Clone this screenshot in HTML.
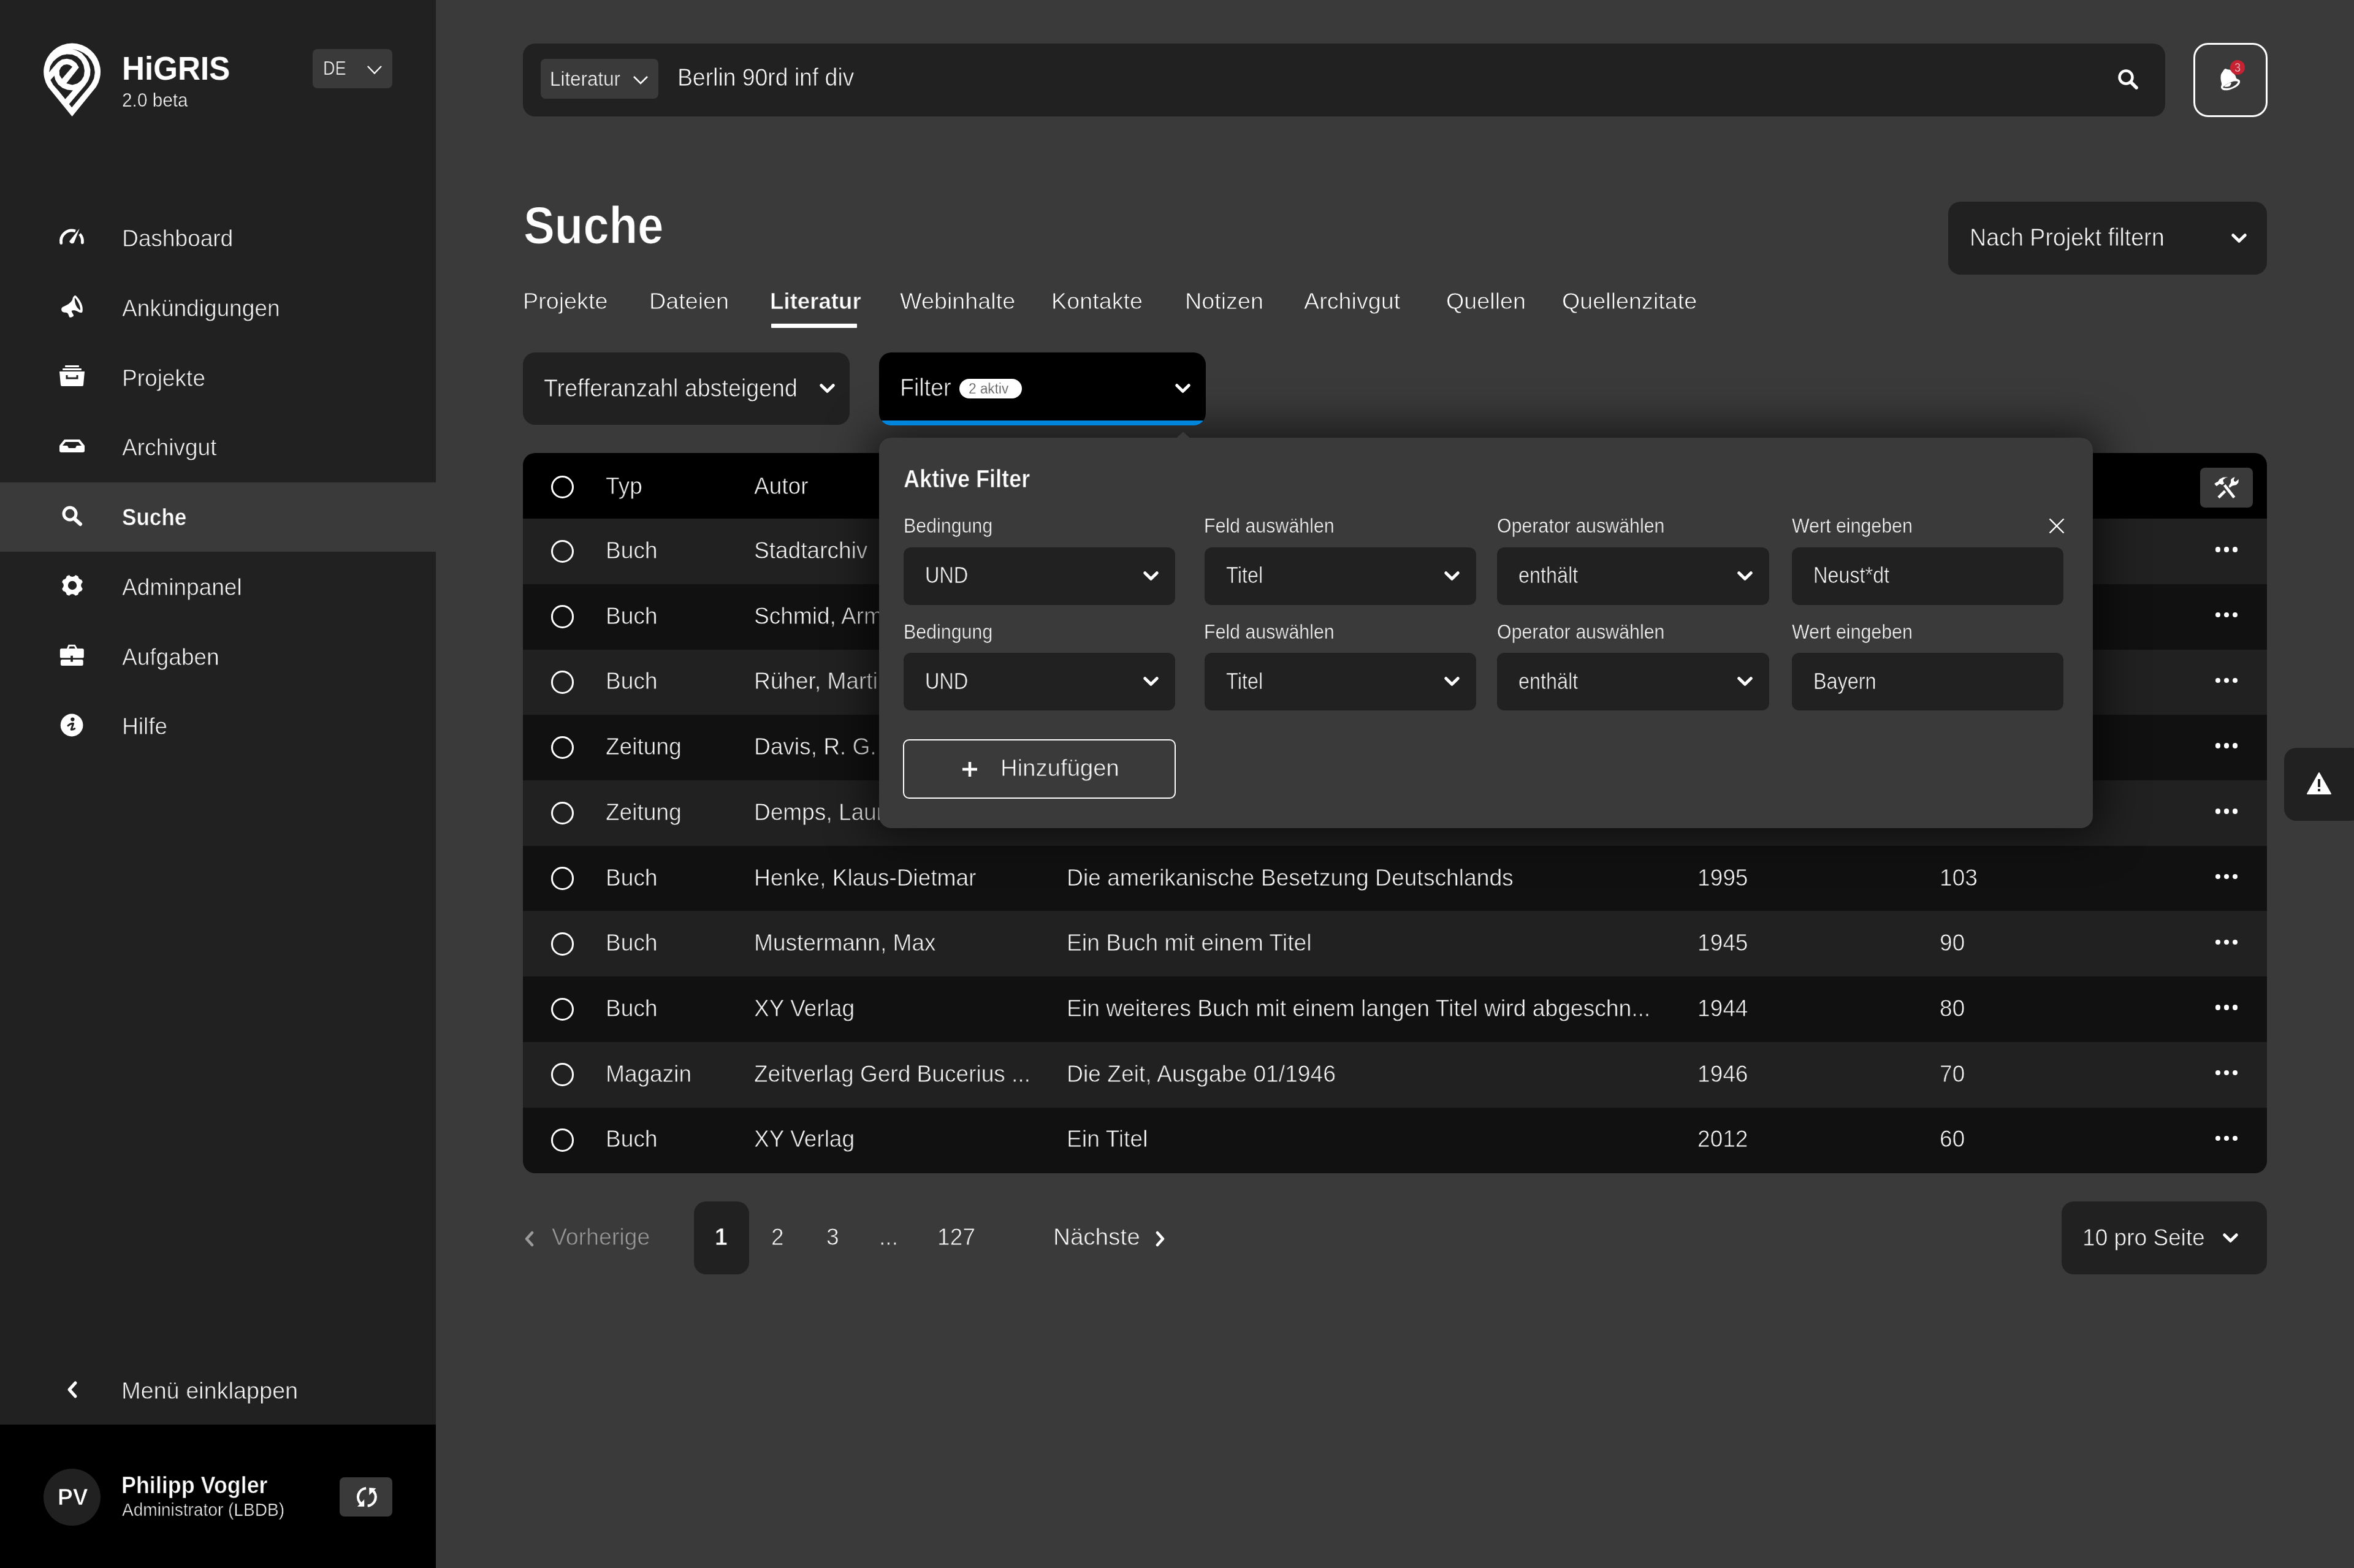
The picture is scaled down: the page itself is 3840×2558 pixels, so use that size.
<!DOCTYPE html>
<html><head><meta charset="utf-8"><style>
html,body{margin:0;padding:0;}
body{width:3840px;height:2558px;overflow:hidden;position:relative;background:#3a3a3a;font-family:"Liberation Sans",sans-serif;color:#fff;}
.t{position:absolute;white-space:nowrap;transform-origin:0 0;will-change:transform;}
.r{position:absolute;}
</style></head><body>
<div class="r" style="left:0.0px;top:0.0px;width:711.4px;height:2558.0px;background:#212121;"></div>
<div class="r" style="left:0.0px;top:786.8px;width:711.4px;height:112.8px;background:#3a3a3a;"></div>
<div class="r" style="left:0.0px;top:2324.0px;width:711.4px;height:234.0px;background:#000;"></div>
<svg class="r" style="left:60.0px;top:60.0px;" width="120" height="140" viewBox="0 0 120 140"><path d="M57.6 130 L18.5 82 A46.4 46.4 0 1 1 96.7 82 Z" fill="#fff"/><polygon points="58.04,20.09 67.86,22.32 75.89,25.89 83.04,31.25 89.29,39.29 93.30,48.21 94.82,58.04 93.30,67.86 89.29,75.89 84.82,82.14 57.14,115.18 52.68,109.82 78.57,79.46 83.93,71.43 87.05,62.50 87.50,53.57 84.82,42.86 80.36,34.82 73.21,26.79 66.07,22.77" fill="#212121"/><polygon points="20.09,58.04 21.88,48.21 26.79,40.18 33.93,33.93 41.07,29.91 49.11,28.39 58.04,29.02 66.07,32.59 72.32,38.39 76.34,46.43 77.86,55.36 76.79,64.29 72.32,71.43 66.07,76.34 58.04,78.57 48.21,75.89 68.75,50.00 64.29,42.86 57.14,37.50 49.11,35.71 41.07,37.05 34.38,41.52 26.79,50.00" fill="#212121"/><polygon points="58.04,49.11 53.57,45.98 49.11,45.09 43.75,45.98 39.29,50.00 36.79,55.36 37.05,62.50 41.07,68.75" fill="#212121"/><polygon points="22.32,70.54 28.57,63.39 30.36,70.54 34.82,77.68 41.96,83.48 50.00,86.61 58.93,87.50 46.43,101.79 35.71,88.39 26.79,78.57" fill="#212121"/></svg>
<div class="t" style="left:199.3px;top:85.1px;font-size:53px;line-height:53px;font-weight:900;transform:scaleX(0.965);">HiGRIS</div>
<div class="t" style="left:199.3px;top:147.2px;font-size:32px;line-height:32px;-webkit-text-stroke:0.6px #212121;transform:scaleX(0.93);">2.0 beta</div>
<div class="r" style="left:510.0px;top:79.5px;width:130.0px;height:64.0px;background:#3a3a3a;border-radius:8px;"></div>
<div class="t" style="left:526.5px;top:96.1px;font-size:31px;line-height:31px;-webkit-text-stroke:0.6px #3a3a3a;transform:scaleX(0.87);">DE</div>
<svg class="r" style="left:598.0px;top:105.0px;" width="26" height="18" viewBox="0 0 26 18"><polyline points="1.8,3 12.9,14.6 24,3" fill="none" stroke="#fff" stroke-width="2.2"/></svg>
<div class="t" style="left:198.5px;top:369.0px;font-size:39px;line-height:39px;-webkit-text-stroke:0.8px #212121;transform:scaleX(0.95);">Dashboard</div>
<div class="t" style="left:198.5px;top:482.8px;font-size:39px;line-height:39px;-webkit-text-stroke:0.8px #212121;transform:scaleX(0.95);">Ankündigungen</div>
<div class="t" style="left:198.5px;top:596.5px;font-size:39px;line-height:39px;-webkit-text-stroke:0.8px #212121;transform:scaleX(0.95);">Projekte</div>
<div class="t" style="left:198.5px;top:710.3px;font-size:39px;line-height:39px;-webkit-text-stroke:0.8px #212121;transform:scaleX(0.95);">Archivgut</div>
<div class="t" style="left:198.5px;top:824.1px;font-size:39px;line-height:39px;-webkit-text-stroke:0.6px #3a3a3a;font-weight:700;transform:scaleX(0.9);">Suche</div>
<div class="t" style="left:198.5px;top:937.8px;font-size:39px;line-height:39px;-webkit-text-stroke:0.8px #212121;transform:scaleX(0.95);">Adminpanel</div>
<div class="t" style="left:198.5px;top:1051.6px;font-size:39px;line-height:39px;-webkit-text-stroke:0.8px #212121;transform:scaleX(0.95);">Aufgaben</div>
<div class="t" style="left:198.5px;top:1165.4px;font-size:39px;line-height:39px;-webkit-text-stroke:0.8px #212121;transform:scaleX(0.95);">Hilfe</div>
<svg class="r" style="left:90.0px;top:360.0px;" width="60" height="50" viewBox="0 0 60 50"><path d="M9.77 36.54 A17.5 17.5 0 0 1 32.99 17.06" fill="none" stroke="#fff" stroke-width="4.7"/><path d="M40.01 21.79 A17.5 17.5 0 0 1 44.33 35.94" fill="none" stroke="#fff" stroke-width="4.7"/><circle cx="9.77" cy="36.54" r="2.35" fill="#fff"/><circle cx="44.33" cy="35.94" r="2.35" fill="#fff"/><path d="M39.8 12.8 L30.6 36.2 A4.6 4.6 0 0 1 23.2 33.4 Z" fill="#fff"/></svg>
<svg class="r" style="left:90.0px;top:470.0px;" width="60" height="60" viewBox="0 0 60 60"><path d="M31.76 12.25 C30.94 12.69 29.79 14.03 29.09 15.31 C28.38 16.58 28.58 18.31 27.55 19.90 C26.53 21.50 24.88 23.34 22.96 24.88 C21.05 26.41 17.99 28.00 16.07 29.09 C14.16 30.17 12.47 30.49 11.48 31.38 C10.49 32.27 10.14 33.30 10.14 34.44 C10.14 35.59 10.62 37.38 11.48 38.27 C12.34 39.16 13.84 39.35 15.31 39.80 C16.78 40.25 19.01 39.80 20.28 40.95 C21.56 42.10 22.20 45.54 22.96 46.69 C23.73 47.84 23.79 47.97 24.88 47.84 C25.96 47.71 28.64 46.63 29.47 45.92 C30.30 45.22 30.30 45.03 29.85 43.63 C29.40 42.22 26.66 38.72 26.79 37.50 C26.92 36.29 29.21 36.36 30.62 36.36 C32.02 36.36 33.61 36.93 35.21 37.50 C36.80 38.08 38.72 39.48 40.18 39.80 C41.65 40.12 43.25 40.31 44.01 39.42 C44.78 38.53 44.78 36.23 44.78 34.44 C44.78 32.66 44.58 30.74 44.01 28.70 C43.44 26.66 42.42 24.24 41.33 22.20 C40.25 20.16 38.72 18.05 37.50 16.46 C36.29 14.86 35.02 13.33 34.06 12.63 C33.10 11.93 32.59 11.80 31.76 12.25 Z" fill="#fff"/><path d="M32.15 16.07 C32.82 15.95 35.14 19.52 36.36 21.43 C37.57 23.34 38.65 25.19 39.42 27.55 C40.18 29.91 41.40 34.76 40.95 35.59 C40.50 36.42 37.95 33.87 36.74 32.53 C35.53 31.19 34.41 29.28 33.68 27.55 C32.94 25.83 32.59 24.11 32.34 22.20 C32.08 20.28 31.48 16.20 32.15 16.07 Z" fill="#212121"/></svg>
<svg class="r" style="left:97.0px;top:596.0px;" width="41" height="35" viewBox="0 0 41 35"><rect x="9" y="0" width="23" height="3" rx="1" fill="#fff"/><rect x="5" y="5" width="31" height="3" rx="1" fill="#fff"/><path d="M0 10 L41 10 L39 32 C39 33 38 34 37 34 L4 34 C3 34 2 33 2 32 Z" fill="#fff"/><path d="M12 16 L12 21 L29 21 L29 16" fill="none" stroke="#212121" stroke-width="3"/></svg>
<svg class="r" style="left:97.0px;top:717.0px;" width="41" height="21" viewBox="0 0 41 21"><path d="M8 0 L33 0 L41 10 L41 18 C41 20 40 21 38 21 L3 21 C1 21 0 20 0 18 L0 10 Z" fill="#fff"/><path d="M5 10 L10 4 L31 4 L36 10 L28 10 L26 14 L15 14 L13 10 Z" fill="#212121"/></svg>
<svg class="r" style="left:100.0px;top:825.0px;" width="36" height="34" viewBox="0 0 36 34"><circle cx="14" cy="13" r="10" fill="none" stroke="#fff" stroke-width="5"/><line x1="21" y1="21" x2="31" y2="30" stroke="#fff" stroke-width="6" stroke-linecap="round"/></svg>
<svg class="r" style="left:97.5px;top:935.0px;" width="40" height="40" viewBox="0 0 40 40"><mask id="gm"><rect width="40" height="40" fill="#fff"/><circle cx="40.00" cy="20.00" r="5.9" fill="#000"/><circle cx="35.27" cy="35.27" r="5.9" fill="#000"/><circle cx="20.00" cy="40.00" r="5.9" fill="#000"/><circle cx="4.73" cy="35.27" r="5.9" fill="#000"/><circle cx="0.00" cy="20.00" r="5.9" fill="#000"/><circle cx="4.73" cy="4.73" r="5.9" fill="#000"/><circle cx="20.00" cy="0.00" r="5.9" fill="#000"/><circle cx="35.27" cy="4.73" r="5.9" fill="#000"/><circle cx="20" cy="20" r="7.2" fill="#000"/></mask><circle cx="20" cy="20" r="17.6" fill="#fff" mask="url(#gm)"/></svg>
<svg class="r" style="left:90.0px;top:1045.0px;" width="55" height="165" viewBox="0 0 55 165"><path d="M18.9 13.4 L21.6 6.8 L32.6 6.8 L36.3 13.4 L33.1 13.4 L31 9.6 L23.7 9.6 L21.8 13.4 Z" fill="#fff"/><rect x="7.9" y="13.1" width="38.9" height="15.5" rx="2.5" fill="#fff"/><rect x="8.9" y="31" width="36.8" height="10" rx="2.5" fill="#fff"/><rect x="8" y="28.6" width="38.8" height="2.4" fill="#212121"/><rect x="25.2" y="24.7" width="3.7" height="10" fill="#212121"/><circle cx="27.1" cy="138" r="18.4" fill="#fff"/><circle cx="28.4" cy="128.6" r="3.1" fill="#212121"/><path d="M21 138.8 C23.5 136.6 26.5 135 29.6 135.4 L26.2 145.2 C28 145.6 30 144.9 31.8 143.6" fill="none" stroke="#212121" stroke-width="3.0" stroke-linecap="round" stroke-linejoin="round"/></svg>
<svg class="r" style="left:106.0px;top:2252.0px;" width="24" height="30" viewBox="0 0 24 30"><polyline points="17,4 7,15 17,26" fill="none" stroke="#fff" stroke-width="5" stroke-linecap="round" stroke-linejoin="round"/></svg>
<div class="t" style="left:197.8px;top:2249.0px;font-size:39px;line-height:39px;-webkit-text-stroke:0.8px #212121;transform:scaleX(0.97);">Menü einklappen</div>
<div class="r" style="left:71.0px;top:2396.0px;width:93.0px;height:93.0px;background:#212121;border-radius:47px;"></div>
<div class="t" style="left:93.8px;top:2424.1px;font-size:37px;line-height:37px;-webkit-text-stroke:0.7px #212121;font-weight:700;">PV</div>
<div class="t" style="left:197.8px;top:2403.0px;font-size:39px;line-height:39px;-webkit-text-stroke:0.6px #000;font-weight:700;transform:scaleX(0.92);">Philipp Vogler</div>
<div class="t" style="left:198.7px;top:2447.6px;font-size:30px;line-height:30px;-webkit-text-stroke:0.6px #000;transform:scaleX(0.935);">Administrator (LBDB)</div>
<div class="r" style="left:554.0px;top:2410.0px;width:86.0px;height:64.0px;background:#3a3a3a;border-radius:8px;"></div>
<svg class="r" style="left:570.0px;top:2415.0px;" width="60" height="55" viewBox="0 0 60 55"><path d="M27.14 12.95 A14.4 14.4 0 0 0 19.53 38.65" fill="none" stroke="#fff" stroke-width="4.3"/><path d="M29.66 41.65 A14.4 14.4 0 0 0 37.27 15.95" fill="none" stroke="#fff" stroke-width="4.3"/><path d="M13 42.8 L24.2 42.8 L24.2 30.9 Z" fill="#fff"/><path d="M32.3 11.9 L43.5 13 L32.3 24.2 Z" fill="#fff"/></svg>
<div class="r" style="left:853.4px;top:71.0px;width:2678.3px;height:119.0px;background:#212121;border-radius:20px;"></div>
<div class="r" style="left:882.0px;top:96.4px;width:191.6px;height:64.3px;background:#3a3a3a;border-radius:8px;"></div>
<div class="t" style="left:896.5px;top:112.4px;font-size:33px;line-height:33px;-webkit-text-stroke:0.6px #3a3a3a;transform:scaleX(0.95);">Literatur</div>
<svg class="r" style="left:1031.0px;top:121.0px;" width="28" height="20" viewBox="0 0 28 20"><polyline points="3,4 14,15 25,4" fill="none" stroke="#fff" stroke-width="2.6"/></svg>
<div class="t" style="left:1104.5px;top:105.6px;font-size:41px;line-height:41px;-webkit-text-stroke:0.8px #212121;transform:scaleX(0.91);">Berlin 90rd inf div</div>
<svg class="r" style="left:3454.0px;top:112.0px;" width="36" height="36" viewBox="0 0 36 36"><circle cx="14" cy="14" r="10.5" fill="none" stroke="#fff" stroke-width="4.5"/><line x1="22" y1="22" x2="31" y2="31" stroke="#fff" stroke-width="5.5" stroke-linecap="round"/></svg>
<div class="r" style="left:3578.0px;top:70.3px;width:120.7px;height:121.0px;background:transparent;border-radius:24px;border:3px solid #fff;box-sizing:border-box;"></div>
<svg class="r" style="left:3610.0px;top:95.0px;" width="60" height="60" viewBox="0 0 60 60"><path d="M19.52 17.22 C20.79 16.71 22.20 17.99 23.73 18.37 C25.26 18.75 26.66 17.99 28.70 19.52 C30.74 21.05 34.38 25.32 35.97 27.55 C37.57 29.79 37.12 31.64 38.27 32.91 C39.42 34.19 41.91 34.19 42.86 35.21 C43.82 36.23 44.27 37.57 44.01 39.04 C43.76 40.50 42.93 42.42 41.33 44.01 C39.74 45.61 37.19 47.26 34.44 48.60 C31.70 49.94 27.87 51.54 24.88 52.05 C21.88 52.56 18.43 52.37 16.46 51.66 C14.48 50.96 13.39 49.43 13.01 47.84 C12.63 46.24 14.22 44.33 14.16 42.10 C14.10 39.86 12.82 36.99 12.63 34.44 C12.44 31.89 12.44 28.96 13.01 26.79 C13.59 24.62 14.99 23.03 16.07 21.43 C17.16 19.84 18.24 17.73 19.52 17.22 Z" fill="#fff"/><path d="M16.46 47.84 C15.82 46.75 20.28 43.76 22.96 42.10 C25.64 40.44 29.60 38.53 32.53 37.89 C35.46 37.25 39.93 37.25 40.57 38.27 C41.20 39.29 38.65 42.29 36.36 44.01 C34.06 45.73 30.11 47.97 26.79 48.60 C23.47 49.24 17.09 48.92 16.46 47.84 Z" fill="#3a3a3a"/><path d="M18.37 45.54 C18.82 44.71 21.88 42.67 23.73 41.71 C25.58 40.76 28.83 39.23 29.47 39.80 C30.11 40.38 28.96 44.01 27.55 45.16 C26.15 46.31 22.58 46.63 21.05 46.69 C19.52 46.75 17.92 46.37 18.37 45.54 Z" fill="#fff"/></svg>
<div class="r" style="left:3638.0px;top:98.1px;width:24.4px;height:24.4px;background:#c62232;border-radius:13px;"></div>
<div class="t" style="left:3644.5px;top:99.9px;font-size:20px;line-height:20px;-webkit-text-stroke:0.6px #c62232;transform:scaleX(0.9);">3</div>
<div class="t" style="left:853.5px;top:324.2px;font-size:86px;line-height:86px;-webkit-text-stroke:1.2px #3a3a3a;font-weight:700;transform:scaleX(0.885);">Suche</div>
<div class="t" style="left:853.0px;top:472.7px;font-size:37px;line-height:37px;-webkit-text-stroke:0.8px #3a3a3a;transform:scaleX(1.02);">Projekte</div>
<div class="t" style="left:1058.9px;top:472.7px;font-size:37px;line-height:37px;-webkit-text-stroke:0.8px #3a3a3a;transform:scaleX(1.02);">Dateien</div>
<div class="t" style="left:1255.5px;top:472.7px;font-size:37px;line-height:37px;-webkit-text-stroke:0.6px #3a3a3a;font-weight:700;transform:scaleX(0.99);">Literatur</div>
<div class="t" style="left:1467.5px;top:472.7px;font-size:37px;line-height:37px;-webkit-text-stroke:0.8px #3a3a3a;transform:scaleX(1.02);">Webinhalte</div>
<div class="t" style="left:1715.3px;top:472.7px;font-size:37px;line-height:37px;-webkit-text-stroke:0.8px #3a3a3a;transform:scaleX(1.02);">Kontakte</div>
<div class="t" style="left:1932.5px;top:472.7px;font-size:37px;line-height:37px;-webkit-text-stroke:0.8px #3a3a3a;transform:scaleX(1.02);">Notizen</div>
<div class="t" style="left:2126.5px;top:472.7px;font-size:37px;line-height:37px;-webkit-text-stroke:0.8px #3a3a3a;transform:scaleX(1.02);">Archivgut</div>
<div class="t" style="left:2358.5px;top:472.7px;font-size:37px;line-height:37px;-webkit-text-stroke:0.8px #3a3a3a;transform:scaleX(1.02);">Quellen</div>
<div class="t" style="left:2548.0px;top:472.7px;font-size:37px;line-height:37px;-webkit-text-stroke:0.8px #3a3a3a;transform:scaleX(1.02);">Quellenzitate</div>
<div class="r" style="left:1258.0px;top:528.0px;width:140.0px;height:7.0px;background:#fff;border-radius:1px;"></div>
<div class="r" style="left:3178.0px;top:329.0px;width:520.0px;height:118.6px;background:#212121;border-radius:20px;"></div>
<div class="t" style="left:3212.5px;top:366.6px;font-size:40px;line-height:40px;-webkit-text-stroke:0.8px #212121;transform:scaleX(0.94);">Nach Projekt filtern</div>
<svg class="r" style="left:3636.0px;top:376.5px;" width="33" height="23" viewBox="-5 -5 33 23"><polyline points="1.75,1.75 11.5,11.25 21.25,1.75" fill="none" stroke="#fff" stroke-width="5" stroke-linecap="round" stroke-linejoin="round"/></svg>
<div class="r" style="left:853.0px;top:739.4px;width:2845.0px;height:106.7px;background:#000;border-radius:20px 20px 0 0;"></div>
<div class="r" style="left:853.0px;top:846.1px;width:2845.0px;height:107.2px;background:#212121;"></div>
<div class="r" style="left:853.0px;top:952.8px;width:2845.0px;height:107.2px;background:#111111;"></div>
<div class="r" style="left:853.0px;top:1059.6px;width:2845.0px;height:107.2px;background:#212121;"></div>
<div class="r" style="left:853.0px;top:1166.3px;width:2845.0px;height:107.2px;background:#111111;"></div>
<div class="r" style="left:853.0px;top:1273.0px;width:2845.0px;height:107.2px;background:#212121;"></div>
<div class="r" style="left:853.0px;top:1379.7px;width:2845.0px;height:107.2px;background:#111111;"></div>
<div class="r" style="left:853.0px;top:1486.4px;width:2845.0px;height:107.2px;background:#212121;"></div>
<div class="r" style="left:853.0px;top:1593.2px;width:2845.0px;height:107.2px;background:#111111;"></div>
<div class="r" style="left:853.0px;top:1699.9px;width:2845.0px;height:107.2px;background:#212121;"></div>
<div class="r" style="left:853.0px;top:1806.6px;width:2845.0px;height:107.2px;background:#111111;border-radius:0 0 20px 20px;"></div>
<div class="r" style="left:898.5px;top:775.7px;width:37.6px;height:37.6px;background:transparent;border-radius:19px;border:3.1px solid #fff;box-sizing:border-box;"></div>
<div class="t" style="left:987.5px;top:772.5px;font-size:39px;line-height:39px;-webkit-text-stroke:0.8px #000;transform:scaleX(0.95);">Typ</div>
<div class="t" style="left:1230.0px;top:772.5px;font-size:39px;line-height:39px;-webkit-text-stroke:0.8px #000;transform:scaleX(0.95);">Autor</div>
<div class="r" style="left:3589.0px;top:763.0px;width:85.5px;height:64.6px;background:#3a3a3a;border-radius:8px;"></div>
<svg class="r" style="left:3589.2px;top:763.0px;" width="85" height="65" viewBox="0 0 85 65"><polygon points="23.22,26.19 26.52,23.83 28.88,22.89 31.71,18.64 37.38,15.81 45.40,15.34 41.15,16.75 37.38,20.06 37.85,23.36 39.26,25.25 35.96,28.08 31.71,26.19 28.41,29.02 26.52,29.97" fill="#fff"/><polygon points="46.58,30.20 48.23,32.80 52.48,29.50 59.08,28.08 62.39,24.30 62.86,18.64 57.67,22.89 55.31,21.94 54.84,19.58 56.72,15.34 52.95,16.75 50.12,19.58 50.12,24.30 47.76,28.08" fill="#fff"/><line x1="39.74" y1="28.32" x2="55.55" y2="48.61" stroke="#fff" stroke-width="4.6"/><line x1="30.06" y1="48.61" x2="40.68" y2="38.23" stroke="#fff" stroke-width="4.6"/></svg>
<div class="r" style="left:898.5px;top:880.7px;width:37.6px;height:37.6px;background:transparent;border-radius:19px;border:3.1px solid #fff;box-sizing:border-box;"></div>
<div class="t" style="left:988.0px;top:877.9px;font-size:39px;line-height:39px;-webkit-text-stroke:0.8px #212121;transform:scaleX(0.95);">Buch</div>
<div class="t" style="left:1230.3px;top:877.9px;font-size:39px;line-height:39px;-webkit-text-stroke:0.8px #212121;transform:scaleX(0.95);">Stadtarchiv</div>
<div class="t" style="left:1739.5px;top:877.9px;font-size:39px;line-height:39px;-webkit-text-stroke:0.8px #212121;transform:scaleX(0.955);">Stadtchronik Neustadt</div>
<div class="t" style="left:2769.2px;top:877.9px;font-size:39px;line-height:39px;-webkit-text-stroke:0.8px #212121;transform:scaleX(0.95);">1990</div>
<div class="t" style="left:3163.9px;top:877.9px;font-size:39px;line-height:39px;-webkit-text-stroke:0.8px #212121;transform:scaleX(0.95);">140</div>
<div class="r" style="left:3613.7px;top:892.2px;width:8.6px;height:8.6px;background:#fff;border-radius:5px;"></div>
<div class="r" style="left:3627.7px;top:892.2px;width:8.6px;height:8.6px;background:#fff;border-radius:5px;"></div>
<div class="r" style="left:3641.7px;top:892.2px;width:8.6px;height:8.6px;background:#fff;border-radius:5px;"></div>
<div class="r" style="left:898.5px;top:987.4px;width:37.6px;height:37.6px;background:transparent;border-radius:19px;border:3.1px solid #fff;box-sizing:border-box;"></div>
<div class="t" style="left:988.0px;top:984.6px;font-size:39px;line-height:39px;-webkit-text-stroke:0.8px #111111;transform:scaleX(0.95);">Buch</div>
<div class="t" style="left:1230.3px;top:984.6px;font-size:39px;line-height:39px;-webkit-text-stroke:0.8px #111111;transform:scaleX(0.95);">Schmid, Armin</div>
<div class="t" style="left:1739.5px;top:984.6px;font-size:39px;line-height:39px;-webkit-text-stroke:0.8px #111111;transform:scaleX(0.955);">Neustadt im Wandel</div>
<div class="t" style="left:2769.2px;top:984.6px;font-size:39px;line-height:39px;-webkit-text-stroke:0.8px #111111;transform:scaleX(0.95);">1980</div>
<div class="t" style="left:3163.9px;top:984.6px;font-size:39px;line-height:39px;-webkit-text-stroke:0.8px #111111;transform:scaleX(0.95);">130</div>
<div class="r" style="left:3613.7px;top:998.9px;width:8.6px;height:8.6px;background:#fff;border-radius:5px;"></div>
<div class="r" style="left:3627.7px;top:998.9px;width:8.6px;height:8.6px;background:#fff;border-radius:5px;"></div>
<div class="r" style="left:3641.7px;top:998.9px;width:8.6px;height:8.6px;background:#fff;border-radius:5px;"></div>
<div class="r" style="left:898.5px;top:1094.1px;width:37.6px;height:37.6px;background:transparent;border-radius:19px;border:3.1px solid #fff;box-sizing:border-box;"></div>
<div class="t" style="left:988.0px;top:1091.3px;font-size:39px;line-height:39px;-webkit-text-stroke:0.8px #212121;transform:scaleX(0.95);">Buch</div>
<div class="t" style="left:1230.3px;top:1091.3px;font-size:39px;line-height:39px;-webkit-text-stroke:0.8px #212121;transform:scaleX(0.95);">Rüher, Martin</div>
<div class="t" style="left:1739.5px;top:1091.3px;font-size:39px;line-height:39px;-webkit-text-stroke:0.8px #212121;transform:scaleX(0.955);">Bayern nach dem Krieg</div>
<div class="t" style="left:2769.2px;top:1091.3px;font-size:39px;line-height:39px;-webkit-text-stroke:0.8px #212121;transform:scaleX(0.95);">1970</div>
<div class="t" style="left:3163.9px;top:1091.3px;font-size:39px;line-height:39px;-webkit-text-stroke:0.8px #212121;transform:scaleX(0.95);">120</div>
<div class="r" style="left:3613.7px;top:1105.6px;width:8.6px;height:8.6px;background:#fff;border-radius:5px;"></div>
<div class="r" style="left:3627.7px;top:1105.6px;width:8.6px;height:8.6px;background:#fff;border-radius:5px;"></div>
<div class="r" style="left:3641.7px;top:1105.6px;width:8.6px;height:8.6px;background:#fff;border-radius:5px;"></div>
<div class="r" style="left:898.5px;top:1200.8px;width:37.6px;height:37.6px;background:transparent;border-radius:19px;border:3.1px solid #fff;box-sizing:border-box;"></div>
<div class="t" style="left:988.0px;top:1198.1px;font-size:39px;line-height:39px;-webkit-text-stroke:0.8px #111111;transform:scaleX(0.95);">Zeitung</div>
<div class="t" style="left:1230.3px;top:1198.1px;font-size:39px;line-height:39px;-webkit-text-stroke:0.8px #111111;transform:scaleX(0.95);">Davis, R. G.</div>
<div class="t" style="left:1739.5px;top:1198.1px;font-size:39px;line-height:39px;-webkit-text-stroke:0.8px #111111;transform:scaleX(0.955);">Report</div>
<div class="t" style="left:2769.2px;top:1198.1px;font-size:39px;line-height:39px;-webkit-text-stroke:0.8px #111111;transform:scaleX(0.95);">1946</div>
<div class="t" style="left:3163.9px;top:1198.1px;font-size:39px;line-height:39px;-webkit-text-stroke:0.8px #111111;transform:scaleX(0.95);">110</div>
<div class="r" style="left:3613.7px;top:1212.3px;width:8.6px;height:8.6px;background:#fff;border-radius:5px;"></div>
<div class="r" style="left:3627.7px;top:1212.3px;width:8.6px;height:8.6px;background:#fff;border-radius:5px;"></div>
<div class="r" style="left:3641.7px;top:1212.3px;width:8.6px;height:8.6px;background:#fff;border-radius:5px;"></div>
<div class="r" style="left:898.5px;top:1307.6px;width:37.6px;height:37.6px;background:transparent;border-radius:19px;border:3.1px solid #fff;box-sizing:border-box;"></div>
<div class="t" style="left:988.0px;top:1304.8px;font-size:39px;line-height:39px;-webkit-text-stroke:0.8px #212121;transform:scaleX(0.95);">Zeitung</div>
<div class="t" style="left:1230.3px;top:1304.8px;font-size:39px;line-height:39px;-webkit-text-stroke:0.8px #212121;transform:scaleX(0.95);">Demps, Laurenz</div>
<div class="t" style="left:1739.5px;top:1304.8px;font-size:39px;line-height:39px;-webkit-text-stroke:0.8px #212121;transform:scaleX(0.955);">Berlin</div>
<div class="t" style="left:2769.2px;top:1304.8px;font-size:39px;line-height:39px;-webkit-text-stroke:0.8px #212121;transform:scaleX(0.95);">1950</div>
<div class="t" style="left:3163.9px;top:1304.8px;font-size:39px;line-height:39px;-webkit-text-stroke:0.8px #212121;transform:scaleX(0.95);">105</div>
<div class="r" style="left:3613.7px;top:1319.1px;width:8.6px;height:8.6px;background:#fff;border-radius:5px;"></div>
<div class="r" style="left:3627.7px;top:1319.1px;width:8.6px;height:8.6px;background:#fff;border-radius:5px;"></div>
<div class="r" style="left:3641.7px;top:1319.1px;width:8.6px;height:8.6px;background:#fff;border-radius:5px;"></div>
<div class="r" style="left:898.5px;top:1414.3px;width:37.6px;height:37.6px;background:transparent;border-radius:19px;border:3.1px solid #fff;box-sizing:border-box;"></div>
<div class="t" style="left:988.0px;top:1411.5px;font-size:39px;line-height:39px;-webkit-text-stroke:0.8px #111111;transform:scaleX(0.95);">Buch</div>
<div class="t" style="left:1230.3px;top:1411.5px;font-size:39px;line-height:39px;-webkit-text-stroke:0.8px #111111;transform:scaleX(0.95);">Henke, Klaus-Dietmar</div>
<div class="t" style="left:1739.5px;top:1411.5px;font-size:39px;line-height:39px;-webkit-text-stroke:0.8px #111111;transform:scaleX(0.955);">Die amerikanische Besetzung Deutschlands</div>
<div class="t" style="left:2769.2px;top:1411.5px;font-size:39px;line-height:39px;-webkit-text-stroke:0.8px #111111;transform:scaleX(0.95);">1995</div>
<div class="t" style="left:3163.9px;top:1411.5px;font-size:39px;line-height:39px;-webkit-text-stroke:0.8px #111111;transform:scaleX(0.95);">103</div>
<div class="r" style="left:3613.7px;top:1425.8px;width:8.6px;height:8.6px;background:#fff;border-radius:5px;"></div>
<div class="r" style="left:3627.7px;top:1425.8px;width:8.6px;height:8.6px;background:#fff;border-radius:5px;"></div>
<div class="r" style="left:3641.7px;top:1425.8px;width:8.6px;height:8.6px;background:#fff;border-radius:5px;"></div>
<div class="r" style="left:898.5px;top:1521.0px;width:37.6px;height:37.6px;background:transparent;border-radius:19px;border:3.1px solid #fff;box-sizing:border-box;"></div>
<div class="t" style="left:988.0px;top:1518.2px;font-size:39px;line-height:39px;-webkit-text-stroke:0.8px #212121;transform:scaleX(0.95);">Buch</div>
<div class="t" style="left:1230.3px;top:1518.2px;font-size:39px;line-height:39px;-webkit-text-stroke:0.8px #212121;transform:scaleX(0.95);">Mustermann, Max</div>
<div class="t" style="left:1739.5px;top:1518.2px;font-size:39px;line-height:39px;-webkit-text-stroke:0.8px #212121;transform:scaleX(0.955);">Ein Buch mit einem Titel</div>
<div class="t" style="left:2769.2px;top:1518.2px;font-size:39px;line-height:39px;-webkit-text-stroke:0.8px #212121;transform:scaleX(0.95);">1945</div>
<div class="t" style="left:3163.9px;top:1518.2px;font-size:39px;line-height:39px;-webkit-text-stroke:0.8px #212121;transform:scaleX(0.95);">90</div>
<div class="r" style="left:3613.7px;top:1532.5px;width:8.6px;height:8.6px;background:#fff;border-radius:5px;"></div>
<div class="r" style="left:3627.7px;top:1532.5px;width:8.6px;height:8.6px;background:#fff;border-radius:5px;"></div>
<div class="r" style="left:3641.7px;top:1532.5px;width:8.6px;height:8.6px;background:#fff;border-radius:5px;"></div>
<div class="r" style="left:898.5px;top:1627.7px;width:37.6px;height:37.6px;background:transparent;border-radius:19px;border:3.1px solid #fff;box-sizing:border-box;"></div>
<div class="t" style="left:988.0px;top:1624.9px;font-size:39px;line-height:39px;-webkit-text-stroke:0.8px #111111;transform:scaleX(0.95);">Buch</div>
<div class="t" style="left:1230.3px;top:1624.9px;font-size:39px;line-height:39px;-webkit-text-stroke:0.8px #111111;transform:scaleX(0.95);">XY Verlag</div>
<div class="t" style="left:1739.5px;top:1624.9px;font-size:39px;line-height:39px;-webkit-text-stroke:0.8px #111111;transform:scaleX(0.955);">Ein weiteres Buch mit einem langen Titel wird abgeschn...</div>
<div class="t" style="left:2769.2px;top:1624.9px;font-size:39px;line-height:39px;-webkit-text-stroke:0.8px #111111;transform:scaleX(0.95);">1944</div>
<div class="t" style="left:3163.9px;top:1624.9px;font-size:39px;line-height:39px;-webkit-text-stroke:0.8px #111111;transform:scaleX(0.95);">80</div>
<div class="r" style="left:3613.7px;top:1639.2px;width:8.6px;height:8.6px;background:#fff;border-radius:5px;"></div>
<div class="r" style="left:3627.7px;top:1639.2px;width:8.6px;height:8.6px;background:#fff;border-radius:5px;"></div>
<div class="r" style="left:3641.7px;top:1639.2px;width:8.6px;height:8.6px;background:#fff;border-radius:5px;"></div>
<div class="r" style="left:898.5px;top:1734.4px;width:37.6px;height:37.6px;background:transparent;border-radius:19px;border:3.1px solid #fff;box-sizing:border-box;"></div>
<div class="t" style="left:988.0px;top:1731.7px;font-size:39px;line-height:39px;-webkit-text-stroke:0.8px #212121;transform:scaleX(0.95);">Magazin</div>
<div class="t" style="left:1230.3px;top:1731.7px;font-size:39px;line-height:39px;-webkit-text-stroke:0.8px #212121;transform:scaleX(0.95);">Zeitverlag Gerd Bucerius ...</div>
<div class="t" style="left:1739.5px;top:1731.7px;font-size:39px;line-height:39px;-webkit-text-stroke:0.8px #212121;transform:scaleX(0.955);">Die Zeit, Ausgabe 01/1946</div>
<div class="t" style="left:2769.2px;top:1731.7px;font-size:39px;line-height:39px;-webkit-text-stroke:0.8px #212121;transform:scaleX(0.95);">1946</div>
<div class="t" style="left:3163.9px;top:1731.7px;font-size:39px;line-height:39px;-webkit-text-stroke:0.8px #212121;transform:scaleX(0.95);">70</div>
<div class="r" style="left:3613.7px;top:1745.9px;width:8.6px;height:8.6px;background:#fff;border-radius:5px;"></div>
<div class="r" style="left:3627.7px;top:1745.9px;width:8.6px;height:8.6px;background:#fff;border-radius:5px;"></div>
<div class="r" style="left:3641.7px;top:1745.9px;width:8.6px;height:8.6px;background:#fff;border-radius:5px;"></div>
<div class="r" style="left:898.5px;top:1841.2px;width:37.6px;height:37.6px;background:transparent;border-radius:19px;border:3.1px solid #fff;box-sizing:border-box;"></div>
<div class="t" style="left:988.0px;top:1838.4px;font-size:39px;line-height:39px;-webkit-text-stroke:0.8px #111111;transform:scaleX(0.95);">Buch</div>
<div class="t" style="left:1230.3px;top:1838.4px;font-size:39px;line-height:39px;-webkit-text-stroke:0.8px #111111;transform:scaleX(0.95);">XY Verlag</div>
<div class="t" style="left:1739.5px;top:1838.4px;font-size:39px;line-height:39px;-webkit-text-stroke:0.8px #111111;transform:scaleX(0.955);">Ein Titel</div>
<div class="t" style="left:2769.2px;top:1838.4px;font-size:39px;line-height:39px;-webkit-text-stroke:0.8px #111111;transform:scaleX(0.95);">2012</div>
<div class="t" style="left:3163.9px;top:1838.4px;font-size:39px;line-height:39px;-webkit-text-stroke:0.8px #111111;transform:scaleX(0.95);">60</div>
<div class="r" style="left:3613.7px;top:1852.7px;width:8.6px;height:8.6px;background:#fff;border-radius:5px;"></div>
<div class="r" style="left:3627.7px;top:1852.7px;width:8.6px;height:8.6px;background:#fff;border-radius:5px;"></div>
<div class="r" style="left:3641.7px;top:1852.7px;width:8.6px;height:8.6px;background:#fff;border-radius:5px;"></div>
<svg class="r" style="left:852.0px;top:2006.0px;" width="24" height="30" viewBox="0 0 24 30"><polyline points="16,5 7,15 16,25" fill="none" stroke="#9a9a9a" stroke-width="4.5" stroke-linecap="round" stroke-linejoin="round"/></svg>
<div class="t" style="left:899.7px;top:1998.0px;font-size:39px;line-height:39px;-webkit-text-stroke:0.8px #3a3a3a;color:#9e9e9e;transform:scaleX(0.96);">Vorherige</div>
<div class="r" style="left:1132.0px;top:1960.0px;width:90.0px;height:119.0px;background:#212121;border-radius:20px;"></div>
<div class="t" style="left:1165.5px;top:1998.0px;font-size:39px;line-height:39px;-webkit-text-stroke:0.5px #212121;font-weight:700;transform:scaleX(0.95);">1</div>
<div class="t" style="left:1258.0px;top:1998.0px;font-size:39px;line-height:39px;-webkit-text-stroke:0.8px #3a3a3a;transform:scaleX(0.95);">2</div>
<div class="t" style="left:1348.0px;top:1998.0px;font-size:39px;line-height:39px;-webkit-text-stroke:0.8px #3a3a3a;transform:scaleX(0.95);">3</div>
<div class="t" style="left:1433.5px;top:1998.0px;font-size:39px;line-height:39px;-webkit-text-stroke:0.8px #3a3a3a;transform:scaleX(0.95);">...</div>
<div class="t" style="left:1528.5px;top:1998.0px;font-size:39px;line-height:39px;-webkit-text-stroke:0.8px #3a3a3a;transform:scaleX(0.95);">127</div>
<div class="t" style="left:1718.3px;top:1998.0px;font-size:39px;line-height:39px;-webkit-text-stroke:0.8px #3a3a3a;transform:scaleX(0.99);">Nächste</div>
<svg class="r" style="left:1880.0px;top:2006.0px;" width="24" height="30" viewBox="0 0 24 30"><polyline points="8,5 17,15 8,25" fill="none" stroke="#fff" stroke-width="4.5" stroke-linecap="round" stroke-linejoin="round"/></svg>
<div class="r" style="left:3362.6px;top:1960.0px;width:335.2px;height:119.0px;background:#212121;border-radius:20px;"></div>
<div class="t" style="left:3396.5px;top:1998.6px;font-size:39px;line-height:39px;-webkit-text-stroke:0.8px #212121;transform:scaleX(0.95);">10 pro Seite</div>
<svg class="r" style="left:3621.9px;top:2007.5px;" width="33" height="23" viewBox="-5 -5 33 23"><polyline points="1.75,1.75 11.5,11.25 21.25,1.75" fill="none" stroke="#fff" stroke-width="5" stroke-linecap="round" stroke-linejoin="round"/></svg>
<div class="r" style="left:3725.5px;top:1220.0px;width:130.0px;height:119.0px;background:#212121;border-radius:20px;"></div>
<svg class="r" style="left:3762.0px;top:1259.0px;" width="42" height="38" viewBox="0 0 42 38"><path d="M21 2 L40 36 L2 36 Z" fill="#fff" stroke="#fff" stroke-width="2" stroke-linejoin="round"/><rect x="19" y="12" width="4" height="13" fill="#212121"/><rect x="19" y="28" width="4" height="4" fill="#212121"/></svg>
<div class="r" style="left:853.0px;top:574.5px;width:533.0px;height:118.5px;background:#212121;border-radius:20px;"></div>
<div class="t" style="left:887.4px;top:613.3px;font-size:40px;line-height:40px;-webkit-text-stroke:0.8px #212121;transform:scaleX(0.94);">Trefferanzahl absteigend</div>
<svg class="r" style="left:1332.5px;top:621.5px;" width="33" height="23" viewBox="-5 -5 33 23"><polyline points="1.75,1.75 11.5,11.25 21.25,1.75" fill="none" stroke="#fff" stroke-width="5" stroke-linecap="round" stroke-linejoin="round"/></svg>
<div class="r" style="left:1433.5px;top:713.5px;width:1980.5px;height:637.5px;background:#3a3a3a;border-radius:20px;box-shadow:0 0 70px 14px rgba(0,0,0,0.62);"></div>
<svg class="r" style="left:1918.0px;top:703.5px;" width="24" height="11" viewBox="0 0 24 11"><path d="M1 10.5 L12 0.5 L23 10.5 Z" fill="#3a3a3a"/></svg>
<div class="t" style="left:1473.8px;top:760.6px;font-size:40px;line-height:40px;-webkit-text-stroke:0.6px #3a3a3a;font-weight:700;transform:scaleX(0.9);">Aktive Filter</div>
<div class="t" style="left:1473.8px;top:841.1px;font-size:33px;line-height:33px;-webkit-text-stroke:0.6px #3a3a3a;transform:scaleX(0.92);">Bedingung</div>
<div class="t" style="left:1964.4px;top:841.1px;font-size:33px;line-height:33px;-webkit-text-stroke:0.6px #3a3a3a;transform:scaleX(0.92);">Feld auswählen</div>
<div class="t" style="left:2441.9px;top:841.1px;font-size:33px;line-height:33px;-webkit-text-stroke:0.6px #3a3a3a;transform:scaleX(0.92);">Operator auswählen</div>
<div class="t" style="left:2922.5px;top:841.1px;font-size:33px;line-height:33px;-webkit-text-stroke:0.6px #3a3a3a;transform:scaleX(0.92);">Wert eingeben</div>
<div class="r" style="left:1473.8px;top:892.6px;width:443.5px;height:94.8px;background:#212121;border-radius:12px;"></div>
<div class="r" style="left:1964.5px;top:892.6px;width:443.5px;height:94.8px;background:#212121;border-radius:12px;"></div>
<div class="r" style="left:2442.0px;top:892.6px;width:444.0px;height:94.8px;background:#212121;border-radius:12px;"></div>
<div class="r" style="left:2922.6px;top:892.6px;width:443.4px;height:94.8px;background:#212121;border-radius:12px;"></div>
<div class="t" style="left:1508.8px;top:921.3px;font-size:36px;line-height:36px;-webkit-text-stroke:0.7px #212121;transform:scaleX(0.9);">UND</div>
<div class="t" style="left:1999.5px;top:921.3px;font-size:36px;line-height:36px;-webkit-text-stroke:0.7px #212121;transform:scaleX(0.9);">Titel</div>
<div class="t" style="left:2477.0px;top:921.3px;font-size:36px;line-height:36px;-webkit-text-stroke:0.7px #212121;transform:scaleX(0.9);">enthält</div>
<div class="t" style="left:2958.0px;top:921.3px;font-size:36px;line-height:36px;-webkit-text-stroke:0.7px #212121;transform:scaleX(0.9);">Neust*dt</div>
<svg class="r" style="left:1861.3px;top:928.3px;" width="33" height="23" viewBox="-5 -5 33 23"><polyline points="1.75,1.75 11.5,11.25 21.25,1.75" fill="none" stroke="#fff" stroke-width="5" stroke-linecap="round" stroke-linejoin="round"/></svg>
<svg class="r" style="left:2352.0px;top:928.3px;" width="33" height="23" viewBox="-5 -5 33 23"><polyline points="1.75,1.75 11.5,11.25 21.25,1.75" fill="none" stroke="#fff" stroke-width="5" stroke-linecap="round" stroke-linejoin="round"/></svg>
<svg class="r" style="left:2830.0px;top:928.3px;" width="33" height="23" viewBox="-5 -5 33 23"><polyline points="1.75,1.75 11.5,11.25 21.25,1.75" fill="none" stroke="#fff" stroke-width="5" stroke-linecap="round" stroke-linejoin="round"/></svg>
<div class="t" style="left:1473.8px;top:1014.1px;font-size:33px;line-height:33px;-webkit-text-stroke:0.6px #3a3a3a;transform:scaleX(0.92);">Bedingung</div>
<div class="t" style="left:1964.4px;top:1014.1px;font-size:33px;line-height:33px;-webkit-text-stroke:0.6px #3a3a3a;transform:scaleX(0.92);">Feld auswählen</div>
<div class="t" style="left:2441.9px;top:1014.1px;font-size:33px;line-height:33px;-webkit-text-stroke:0.6px #3a3a3a;transform:scaleX(0.92);">Operator auswählen</div>
<div class="t" style="left:2922.5px;top:1014.1px;font-size:33px;line-height:33px;-webkit-text-stroke:0.6px #3a3a3a;transform:scaleX(0.92);">Wert eingeben</div>
<div class="r" style="left:1473.8px;top:1064.5px;width:443.5px;height:94.8px;background:#212121;border-radius:12px;"></div>
<div class="r" style="left:1964.5px;top:1064.5px;width:443.5px;height:94.8px;background:#212121;border-radius:12px;"></div>
<div class="r" style="left:2442.0px;top:1064.5px;width:444.0px;height:94.8px;background:#212121;border-radius:12px;"></div>
<div class="r" style="left:2922.6px;top:1064.5px;width:443.4px;height:94.8px;background:#212121;border-radius:12px;"></div>
<div class="t" style="left:1508.8px;top:1093.8px;font-size:36px;line-height:36px;-webkit-text-stroke:0.7px #212121;transform:scaleX(0.9);">UND</div>
<div class="t" style="left:1999.5px;top:1093.8px;font-size:36px;line-height:36px;-webkit-text-stroke:0.7px #212121;transform:scaleX(0.9);">Titel</div>
<div class="t" style="left:2477.0px;top:1093.8px;font-size:36px;line-height:36px;-webkit-text-stroke:0.7px #212121;transform:scaleX(0.9);">enthält</div>
<div class="t" style="left:2958.0px;top:1093.8px;font-size:36px;line-height:36px;-webkit-text-stroke:0.7px #212121;transform:scaleX(0.9);">Bayern</div>
<svg class="r" style="left:1861.3px;top:1100.2px;" width="33" height="23" viewBox="-5 -5 33 23"><polyline points="1.75,1.75 11.5,11.25 21.25,1.75" fill="none" stroke="#fff" stroke-width="5" stroke-linecap="round" stroke-linejoin="round"/></svg>
<svg class="r" style="left:2352.0px;top:1100.2px;" width="33" height="23" viewBox="-5 -5 33 23"><polyline points="1.75,1.75 11.5,11.25 21.25,1.75" fill="none" stroke="#fff" stroke-width="5" stroke-linecap="round" stroke-linejoin="round"/></svg>
<svg class="r" style="left:2830.0px;top:1100.2px;" width="33" height="23" viewBox="-5 -5 33 23"><polyline points="1.75,1.75 11.5,11.25 21.25,1.75" fill="none" stroke="#fff" stroke-width="5" stroke-linecap="round" stroke-linejoin="round"/></svg>
<svg class="r" style="left:3340.0px;top:843.0px;" width="30" height="30" viewBox="0 0 30 30"><path d="M3.5 3.5 L26.5 26.5 M26.5 3.5 L3.5 26.5" stroke="#fff" stroke-width="2.4"/></svg>
<div class="r" style="left:1473.0px;top:1206.0px;width:445.0px;height:96.6px;background:transparent;border-radius:10px;border:2.6px solid #fff;box-sizing:border-box;"></div>
<svg class="r" style="left:1568.0px;top:1241.0px;" width="28" height="28" viewBox="0 0 28 28"><path d="M14 2 L14 26 M2 14 L26 14" stroke="#fff" stroke-width="4.5"/></svg>
<div class="t" style="left:1632.0px;top:1234.4px;font-size:38.5px;line-height:38.5px;-webkit-text-stroke:0.8px #3a3a3a;transform:scaleX(0.995);">Hinzufügen</div>
<div class="r" style="left:1433.7px;top:574.5px;width:533.2px;height:119.0px;background:#000;border-radius:20px;overflow:hidden;"><div style="position:absolute;left:0;bottom:0;width:100%;height:8px;background:#0085dd"></div></div>
<div class="t" style="left:1468.0px;top:611.6px;font-size:40px;line-height:40px;-webkit-text-stroke:0.8px #000;transform:scaleX(0.94);">Filter</div>
<div class="r" style="left:1565.0px;top:617.5px;width:101.8px;height:32.1px;background:#fff;border-radius:16px;"></div>
<div class="t" style="left:1580.1px;top:623.3px;font-size:23px;line-height:23px;-webkit-text-stroke:0.4px #fff;color:#444;transform:scaleX(0.98);">2 aktiv</div>
<svg class="r" style="left:1912.8px;top:621.8px;" width="33" height="23" viewBox="-5 -5 33 23"><polyline points="1.75,1.75 11.5,11.25 21.25,1.75" fill="none" stroke="#fff" stroke-width="5" stroke-linecap="round" stroke-linejoin="round"/></svg>
</body></html>
